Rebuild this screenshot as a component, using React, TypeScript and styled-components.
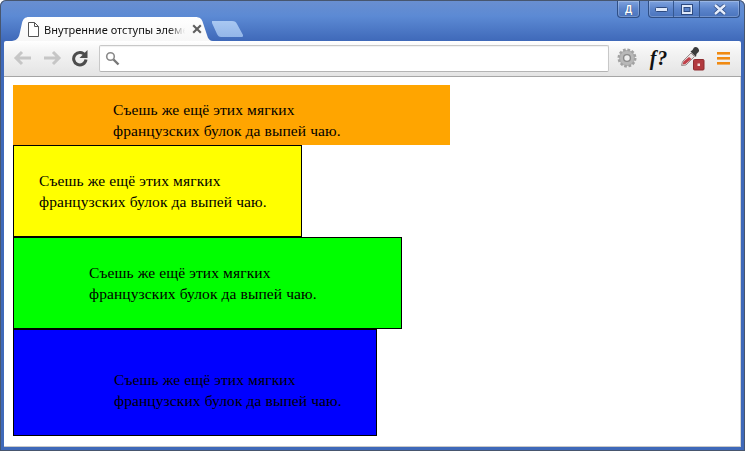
import React from "react";
import styled, { createGlobalStyle } from "styled-components";

const Global = createGlobalStyle`
  html, body { margin: 0; padding: 0; width: 745px; height: 451px; overflow: hidden; background: #fff; }
`;

const Frame = styled.div`
  width: 745px;
  height: 451px;
  box-sizing: border-box;
  display: flex;
  flex-direction: column;
  padding: 1px 4px 4px 4px;
  border-radius: 6px 6px 0 0;
  background: linear-gradient(#6a8fd0 0, #5c8ad4 16px, #3f69b9 41px, #3f69b9 100%);
  box-shadow: inset 0 0 0 1px #47566e;
`;

const TitleBar = styled.div`
  height: 16px;
  display: flex;
  justify-content: flex-end;
  gap: 8px;
  padding-right: 1px;
`;

const CaptionGroup = styled.div`
  display: flex;
  height: 16px;
  border: 1px solid #2f4f86;
  border-top: none;
  border-radius: 0 0 4px 4px;
  background: linear-gradient(#7ea2de, #5b84cb 50%, #4a74bd);
  box-shadow: inset 0 0 0 1px rgba(255, 255, 255, 0.22);
  overflow: hidden;
`;

const CaptionButton = styled.div<{ $w: number }>`
  width: ${(p) => p.$w}px;
  box-sizing: border-box;
  display: flex;
  align-items: center;
  justify-content: center;
  font: bold 10px "Liberation Sans", sans-serif;
  color: #fff;
  text-shadow: 0 0 1px #1d3562;
  & + & {
    border-left: 1px solid #35578f;
  }
`;

const TabStrip = styled.div`
  height: 24px;
  display: flex;
  align-items: flex-end;
  padding-left: 8px;
`;

const Tab = styled.div`
  width: 201px;
  height: 24px;
  box-sizing: border-box;
  display: flex;
  align-items: center;
  padding: 0 0 0 15px;
  background: linear-gradient(#ffffff, #f7f7f7);
  clip-path: path("M0 24 C6 23 7 20 8 15 L10 6 C11 2 13 0 17 0 L183 0 C188 0 190 2 191 6 L195 18 C196 22 198 24 201 24 Z");
`;

const TabTitle = styled.span`
  width: 141px;
  margin-left: 5px;
  white-space: nowrap;
  font: 11px "Noto Sans", "Liberation Sans", sans-serif;
  color: #111;
  -webkit-mask-image: linear-gradient(to right, #000 88%, transparent 100%);
  mask-image: linear-gradient(to right, #000 88%, transparent 100%);
`;

const TabClose = styled.svg`
  margin-left: 7px;
  flex: none;
`;

const NewTab = styled.div`
  width: 32px;
  height: 16px;
  margin: 0 0 4px -1px;
  background: linear-gradient(#a9c8f2, #93b6e8);
  clip-path: path("M0 0 L20 0 C23 0 24 1 25 3 L31 14 C31 15 31 16 30 16 L9 16 C7 16 6 15 5 13 L0 2 Z");
`;

const Toolbar = styled.div`
  height: 36px;
  box-sizing: border-box;
  display: flex;
  align-items: center;
  padding: 0 0 1px 9px;
  background: linear-gradient(#ffffff, #f4f4f4 30%, #e4e4e4);
  border-bottom: 1px solid #a6a6a6;
  border-radius: 2px 2px 0 0;
`;

const NavIcon = styled.svg`
  flex: none;
  margin-right: 9px;
`;

const Omnibox = styled.div`
  width: 510px;
  height: 27px;
  margin: 0 8px 0 1px;
  box-sizing: border-box;
  display: flex;
  align-items: center;
  padding-left: 5px;
  background: #fff;
  border: 1px solid #c8c8c8;
  border-bottom-color: #b4b4b4;
  border-radius: 2px;
  box-shadow: inset 0 1px 1px rgba(0, 0, 0, 0.06);
`;

const Extensions = styled.div`
  display: flex;
  align-items: center;
`;

const FnLabel = styled.span`
  width: 22px;
  margin: 0 11px;
  text-align: center;
  letter-spacing: 1px;
  font: italic bold 20px "Liberation Serif", serif;
  color: #111;
`;

const MenuIcon = styled.svg`
  margin-left: 12px;
  flex: none;
`;

const Viewport = styled.div`
  flex: 1;
  background: #fff;
  padding: 8px 9px;
  border-bottom: 1px solid #c9c9c9;
  border-right: 1px solid #d4d4d4;
  box-sizing: border-box;
  overflow: hidden;
`;

const Block = styled.div<{ $bg: string; $w: number; $h: number; $left: number; $top: number; $border?: boolean }>`
  box-sizing: border-box;
  width: ${(p) => p.$w}px;
  height: ${(p) => p.$h}px;
  padding: ${(p) => p.$top}px 0 0 ${(p) => p.$left}px;
  background: ${(p) => p.$bg};
  border: ${(p) => (p.$border ? "1px solid #000" : "none")};
  font: 15.5px/21px "Liberation Serif", serif;
  letter-spacing: 0.1px;
  color: #000;
`;

const pangram = (
  <>
    Съешь же ещё этих мягких
    <br />
    французских булок да выпей чаю.
  </>
);

export default function App() {
  return (
    <>
      <Global />
      <Frame>
        <TitleBar>
          <CaptionGroup>
            <CaptionButton $w={21}>Д</CaptionButton>
          </CaptionGroup>
          <CaptionGroup>
            <CaptionButton $w={24}>
              <svg width="13" height="5" viewBox="0 0 13 5">
                <rect x="0.5" y="0.5" width="12" height="4" rx="1" fill="#dfe9fa" stroke="#2d4a80" />
              </svg>
            </CaptionButton>
            <CaptionButton $w={26}>
              <svg width="12" height="11" viewBox="0 0 12 11">
                <rect x="0.5" y="0.5" width="11" height="10" fill="#dfe9fa" stroke="#2d4a80" />
                <rect x="3" y="3.5" width="6" height="4" fill="#5a83ca" stroke="#2d4a80" />
              </svg>
            </CaptionButton>
            <CaptionButton $w={40}>
              <svg width="14" height="11" viewBox="0 0 14 11">
                <path d="M2 1 L12 10 M12 1 L2 10" stroke="#2d4a80" strokeWidth="4" />
                <path d="M2 1 L12 10 M12 1 L2 10" stroke="#e6eefc" strokeWidth="2.4" />
              </svg>
            </CaptionButton>
          </CaptionGroup>
        </TitleBar>
        <TabStrip>
          <Tab>
            <svg width="12" height="15" viewBox="0 0 12 15">
              <path d="M1.5 0.5 H7.5 L11.5 4.5 V14.5 H1.5 Z" fill="#fff" stroke="#555" />
              <path d="M7.5 0.5 V4.5 H11.5" fill="none" stroke="#555" />
            </svg>
            <TabTitle>Внутренние отступы элемен</TabTitle>
            <TabClose width="10" height="10" viewBox="0 0 10 10">
              <path d="M1.2 1.2 L8.8 8.8 M8.8 1.2 L1.2 8.8" stroke="#5f5f5f" strokeWidth="2.1" />
            </TabClose>
          </Tab>
          <NewTab />
        </TabStrip>
        <Toolbar>
          <NavIcon width="20" height="16" viewBox="0 0 20 16">
            <path d="M9 2 L3 8 L9 14 M3 8 H18" fill="none" stroke="#c6c6c6" strokeWidth="3" />
          </NavIcon>
          <NavIcon width="20" height="16" viewBox="0 0 20 16">
            <path d="M11 2 L17 8 L11 14 M17 8 H2" fill="none" stroke="#c6c6c6" strokeWidth="3" />
          </NavIcon>
          <NavIcon width="18" height="18" viewBox="0 0 18 18">
            <path d="M14 6.2 A6.2 6.2 0 1 0 15 10.5" fill="none" stroke="#4c4c4c" strokeWidth="3" />
            <path d="M16.5 1 V9 H8.5 Z" fill="#4c4c4c" />
          </NavIcon>
          <Omnibox>
            <svg width="15" height="15" viewBox="0 0 15 15">
              <circle cx="5.5" cy="5.5" r="3.8" fill="#fff" stroke="#8a8a8a" strokeWidth="1.6" />
              <path d="M8.5 8.5 L13.5 13.5" stroke="#777" strokeWidth="2.4" />
            </svg>
          </Omnibox>
          <Extensions>
            <svg width="20" height="20" viewBox="0 0 20 20">
              <circle cx="10" cy="10" r="8" fill="#b0b0b0" stroke="#a2a2a2" strokeWidth="3" strokeDasharray="2.6 1.6" />
              <circle cx="10" cy="10" r="7" fill="#b8b8b8" />
              <circle cx="10" cy="10" r="3.4" fill="#ededed" stroke="#8a8a8a" strokeWidth="1.4" />
            </svg>
            <FnLabel>f?</FnLabel>
            <svg width="24" height="25" viewBox="0 0 24 25">
              <path d="M0.5 19.5 L1.5 15.5 L10 7 L13.5 10.5 L5 19 Z" fill="#e8e4e4" stroke="#9a8a8a" />
              <path d="M1.5 18.5 L2.5 15.5 L8 11 L10.5 13 L4.5 18 Z" fill="#c0414a" />
              <path d="M9.5 5.5 L15 11 L15.5 8 L17.5 6 C19.5 3.5 15.5 -0.5 13 1.5 L11.5 4 Z" fill="#3b3b3b" />
              <rect x="12.5" y="13.5" width="10.5" height="10.5" rx="1" fill="#b23a3f" stroke="#8f2c30" />
              <rect x="16.5" y="17.5" width="2.5" height="2.5" fill="#f3dede" />
            </svg>
            <MenuIcon width="14" height="14" viewBox="0 0 14 14">
              <rect x="0" y="1" width="13" height="2.6" fill="#f08a12" />
              <rect x="0" y="6" width="13" height="2.6" fill="#f08a12" />
              <rect x="0" y="11" width="13" height="2.6" fill="#f08a12" />
            </MenuIcon>
          </Extensions>
        </Toolbar>
        <Viewport>
          <Block $bg="#ffa500" $w={437} $h={60} $left={100} $top={14}>{pangram}</Block>
          <Block $bg="#ffff00" $w={289} $h={92} $left={25} $top={24} $border>{pangram}</Block>
          <Block $bg="#00ff00" $w={389} $h={92} $left={75} $top={24} $border>{pangram}</Block>
          <Block $bg="#0000ff" $w={364} $h={107} $left={100} $top={39} $border>{pangram}</Block>
        </Viewport>
      </Frame>
    </>
  );
}
